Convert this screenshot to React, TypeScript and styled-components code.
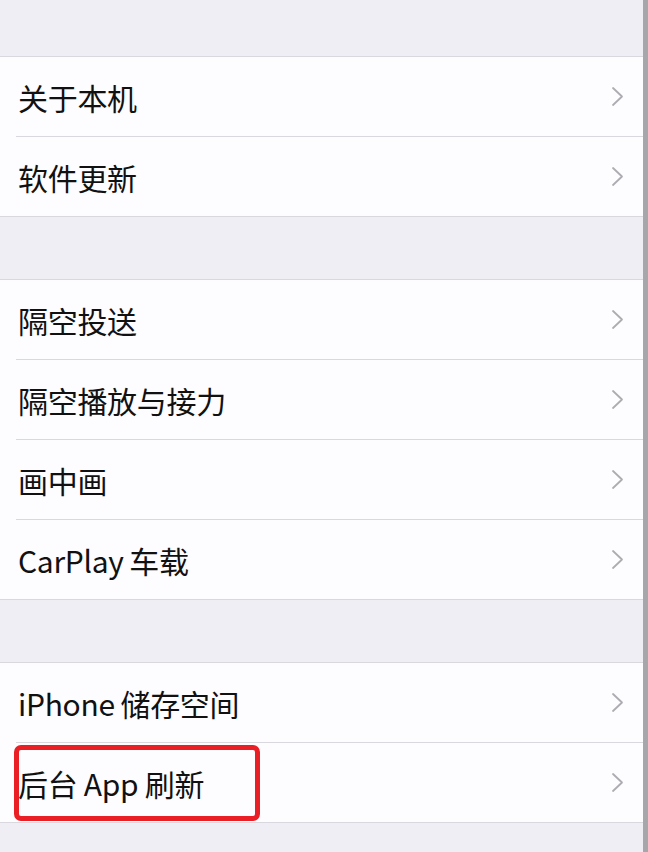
import styled, { createGlobalStyle } from 'styled-components';

type Item = { label: string; marked?: boolean };

const groups: Item[][] = [
  [{ label: '关于本机' }, { label: '软件更新' }],
  [
    { label: '隔空投送' },
    { label: '隔空播放与接力' },
    { label: '画中画' },
    { label: 'CarPlay\u2009车载' },
  ],
  [{ label: 'iPhone\u2009储存空间' }, { label: '后台 App 刷新', marked: true }],
];

const gaps = [56, 62, 62];

function Chevron() {
  return (
    <ChevronIcon width="13" height="21" viewBox="0 0 13 21">
      <path d="M2 2 L11 10.5 L2 19" />
    </ChevronIcon>
  );
}

function SettingsRow({ item }: { item: Item }) {
  return (
    <Row>
      <Body>
        <Label>{item.label}</Label>
        <Chevron />
      </Body>
      {item.marked ? <Highlight /> : null}
    </Row>
  );
}

function App() {
  return (
    <>
      <GlobalStyle />
      <Screen>
        <Content>
          {groups.map((group, i) => (
            <Section key={i}>
              <GroupGap $height={gaps[i]} />
              <Group>
                {group.map((item) => (
                  <SettingsRow key={item.label} item={item} />
                ))}
              </Group>
            </Section>
          ))}
          <Filler />
        </Content>
        <Edge />
      </Screen>
    </>
  );
}

export default App;

const GlobalStyle = createGlobalStyle`
  html, body {
    margin: 0;
    padding: 0;
    height: 852px;
    overflow: hidden;
    background: #efeef4;
  }
  body {
    font-family: "Noto Sans CJK SC", "Noto Sans", sans-serif;
  }
`;

const Screen = styled.div`
  display: flex;
  width: 648px;
  height: 852px;
`;

const Content = styled.div`
  flex: 1;
  display: flex;
  flex-direction: column;
  background: #efeef4;
`;

const Section = styled.div`
  display: flex;
  flex-direction: column;
`;

const GroupGap = styled.div<{ $height: number }>`
  height: ${(p) => p.$height}px;
`;

const Filler = styled.div`
  flex: 1;
`;

const Edge = styled.div`
  width: 5px;
  background: #a7a7ab;
`;

const Group = styled.div`
  background: #fdfcfe;
  border-top: 1px solid #d9d8de;
  border-bottom: 1px solid #d9d8de;
`;

const Row = styled.div`
  position: relative;
  padding-left: 16px;
  &:not(:last-child) > div:first-child {
    border-bottom: 1px solid #d9d8de;
  }
`;

const Body = styled.div`
  height: 79px;
  display: flex;
  align-items: center;
  justify-content: space-between;
  padding-right: 19px;
`;

const Label = styled.span`
  padding-left: 2px;
  font-size: 30px;
  color: #111;
  letter-spacing: -0.3px;
`;

const ChevronIcon = styled.svg`
  flex-shrink: 0;
  fill: none;
  stroke: #adacb1;
  stroke-width: 1.8;
  stroke-linecap: round;
  stroke-linejoin: round;
`;

const Highlight = styled.div`
  position: absolute;
  left: 14px;
  top: 2px;
  width: 246px;
  height: 76px;
  box-sizing: border-box;
  border: 5px solid #ea1f26;
  border-radius: 7px;
  pointer-events: none;
`;
